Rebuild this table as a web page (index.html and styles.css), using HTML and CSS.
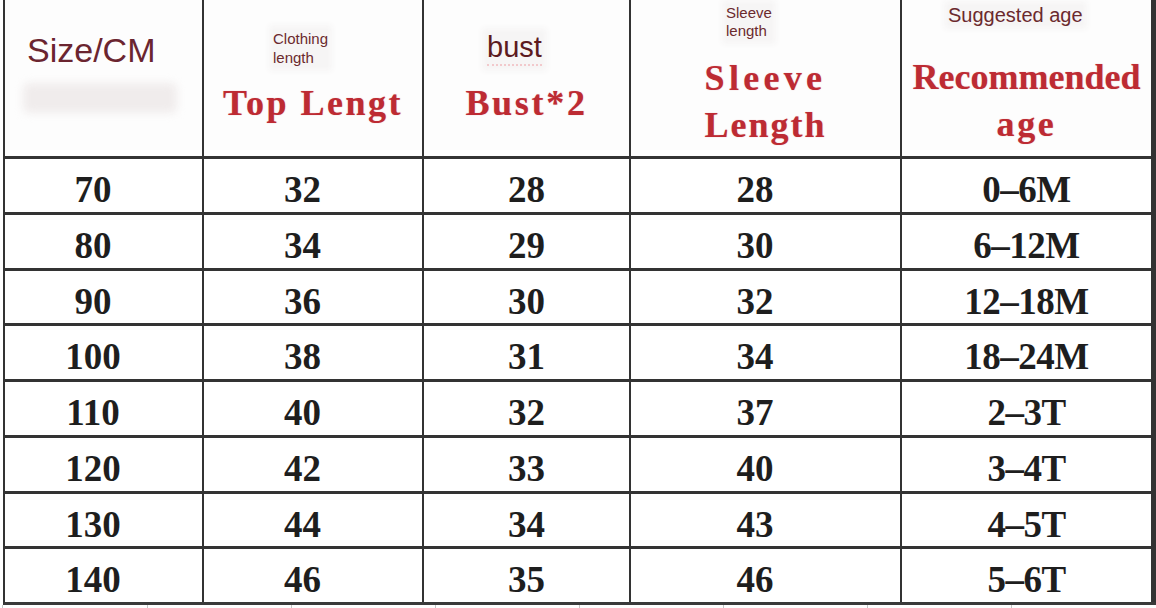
FILE: index.html
```html
<!DOCTYPE html>
<html>
<head>
<meta charset="utf-8">
<link rel="stylesheet" href="styles.css">
</head>
<body>
<div class="sheet">
  <div class="table">
    <div class="hcell h1">
      <div class="size-label">Size/CM</div>
      <div class="smudge"></div>
    </div>
    <div class="hcell h2">
      <div class="small cloth">Clothing<br>length</div>
      <div class="red top">Top Lengt</div>
    </div>
    <div class="hcell h3">
      <div class="bust-label">bust</div>
      <div class="red bust2">Bust*2</div>
    </div>
    <div class="hcell h4">
      <div class="small sleeve-small">Sleeve<br>length</div>
      <div class="red two"><span class="sl">Sleeve</span><br><span class="le">Length</span></div>
    </div>
    <div class="hcell h5">
      <div class="sugg">Suggested age</div>
      <div class="red two"><span class="rec">Recommended</span><br><span class="ag">age</span></div>
    </div>

    <div class="cell sh">70</div><div class="cell sh">32</div><div class="cell">28</div><div class="cell sh">28</div><div class="cell age">0–6M</div>
    <div class="cell sh">80</div><div class="cell sh">34</div><div class="cell">29</div><div class="cell sh">30</div><div class="cell age">6–12M</div>
    <div class="cell sh">90</div><div class="cell sh">36</div><div class="cell">30</div><div class="cell sh">32</div><div class="cell age">12–18M</div>
    <div class="cell sh">100</div><div class="cell sh">38</div><div class="cell">31</div><div class="cell sh">34</div><div class="cell age">18–24M</div>
    <div class="cell sh">110</div><div class="cell sh">40</div><div class="cell">32</div><div class="cell sh">37</div><div class="cell age">2–3T</div>
    <div class="cell sh">120</div><div class="cell sh">42</div><div class="cell">33</div><div class="cell sh">40</div><div class="cell age">3–4T</div>
    <div class="cell sh">130</div><div class="cell sh">44</div><div class="cell">34</div><div class="cell sh">43</div><div class="cell age">4–5T</div>
    <div class="cell sh">140</div><div class="cell sh">46</div><div class="cell">35</div><div class="cell sh">46</div><div class="cell age">5–6T</div>
  </div>
  <div class="ticks"></div>
</div>
</body>
</html>
```

FILE: styles.css
```css
html, body {
  margin: 0;
  padding: 0;
  background: #ffffff;
}

body {
  width: 1156px;
  height: 608px;
  overflow: hidden;
  font-family: "Liberation Sans", Arial, sans-serif;
}

.sheet {
  padding-left: 3px;
}

.table {
  display: grid;
  width: 1150px;
  grid-template-columns: 197px 218px 205px 269px 249px;
  grid-template-rows: 156px repeat(8, 52.75px);
  column-gap: 2px;
  row-gap: 3px;
  background: #333333;
  border-left: 2px solid #333333;
  border-right: 2px solid #333333;
  border-bottom: 3px solid #3a3a3a;
  box-sizing: content-box;
}

.hcell {
  background: #fdfdfd;
  display: flex;
  flex-direction: column;
  align-items: center;
}

.cell {
  background: #ffffff;
  font-family: "Liberation Serif", "Times New Roman", serif;
  font-weight: bold;
  font-size: 37px;
  line-height: 37px;
  color: #1e1e1e;
  text-align: center;
  padding-top: 12px;
  box-sizing: border-box;
}

.cell.sh {
  padding-right: 21px;
}

.cell.age {
  letter-spacing: -0.5px;
}

/* header column 1 */
.h1 {
  align-items: flex-start;
}

.size-label {
  margin-top: 33px;
  margin-left: 22px;
  font-size: 34px;
  line-height: 34px;
  color: #6b2530;
}

.smudge {
  margin-top: 16px;
  margin-left: 18px;
  width: 154px;
  height: 30px;
  background: #f0ecec;
  filter: blur(4px);
  border-radius: 6px;
}

/* small labels */
.small {
  font-size: 15px;
  color: #6b2a2e;
  align-self: flex-start;
  background: #f6f5f5;
  box-shadow: 0 0 6px 4px #f6f5f5;
}

.cloth {
  line-height: 19px;
  margin-top: 29px;
  margin-left: 69px;
}

.sleeve-small {
  line-height: 18px;
  margin-top: 4px;
  margin-left: 95px;
}

/* red header text */
.red {
  font-family: "Liberation Serif", "Times New Roman", serif;
  font-weight: bold;
  font-size: 36px;
  line-height: 36px;
  color: #bd2b33;
  text-align: center;
  text-shadow: 0 0 1px rgba(200, 60, 70, 0.5);
  white-space: nowrap;
}

.top {
  margin-top: 18px;
  letter-spacing: 2.5px;
}

.bust-label {
  align-self: flex-start;
  margin-top: 33px;
  margin-left: 63px;
  font-size: 29px;
  line-height: 29px;
  color: #5c1a20;
  background: #f6f5f5;
  box-shadow: 0 0 6px 5px #f6f5f5;
  border-bottom: 2px dotted #f2c9cc;
  padding-bottom: 2px;
}

.bust2 {
  margin-top: 19px;
  letter-spacing: 2.7px;
}

.two {
  line-height: 47px;
}

.h4 .two {
  margin-top: 15px;
}

.sl {
  letter-spacing: 4.3px;
}

.le {
  letter-spacing: 2px;
}

.rec {
  letter-spacing: 0;
}

.ag {
  letter-spacing: 2.7px;
}

/* column 5 header */
.sugg {
  align-self: flex-start;
  margin-top: 5px;
  margin-left: 46px;
  font-size: 20px;
  line-height: 20px;
  color: #6b2a2e;
  background: #f6f5f5;
  box-shadow: 0 0 6px 4px #f6f5f5;
}

.h5 .two {
  margin-top: 29px;
}

.ticks {
  height: 3px;
  width: 1153px;
  margin-left: -3px;
  background: repeating-linear-gradient(90deg, transparent 0, transparent 143px, #c6c6c6 143px, #c6c6c6 144px);
  background-position: 4px 0;
}
```
